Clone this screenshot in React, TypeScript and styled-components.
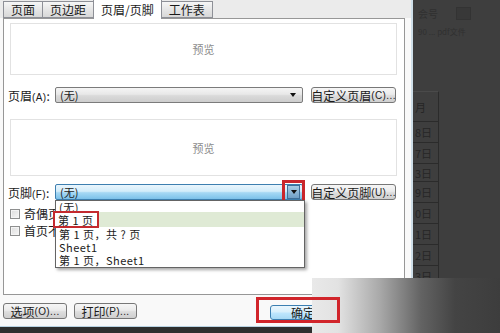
import styled, { createGlobalStyle } from "styled-components";

const GlobalStyle = createGlobalStyle`
  html, body { margin: 0; padding: 0; }
  body {
    width: 500px;
    height: 333px;
    overflow: hidden;
    background: #3d3d3d;
    font-family: "Noto Sans CJK SC", "Liberation Sans", sans-serif;
    color: #1a1a1a;
  }
`;

const tabs = ["页面", "页边距", "页眉/页脚", "工作表"];
const footerOptions = ["(无)", "第 1 页", "第 1 页，共 ? 页", "Sheet1", "第 1 页，Sheet1"];
const itemHeights = [11, 15, 13, 13, 14];
const days = ["8日", "7日", "3日", "9日", "0日", "1日", "2日", "3日"];

export default function App() {
  return (
    <>
      <GlobalStyle />
      <Page>
        <Dialog>
          <TabBar>
            {tabs.map((t) => (
              <Tab key={t} $active={t === "页眉/页脚"}>
                {t}
              </Tab>
            ))}
          </TabBar>
          <Panel>
            <Preview $h={52} $top={4}>预览</Preview>
            <FieldRow $top={12}>
              <Label>
                页眉<Key>(A)</Key>:
              </Label>
              <Select>
                <span>(无)</span>
                <Arrow />
              </Select>
              <Button $w={85}>
                自定义页眉<Key>(C)...</Key>
              </Button>
            </FieldRow>
            <Preview $h={57} $top={16}>预览</Preview>
            <FieldRow $top={8}>
              <Label>
                页脚<Key>(F)</Key>:
              </Label>
              <Select $focused>
                <span>(无)</span>
                <ArrowBox>
                  <Arrow />
                </ArrowBox>
              </Select>
              <Button $w={85}>
                自定义页脚<Key>(U)...</Key>
              </Button>
            </FieldRow>
            <CheckRow $top={8}>
              <Check />
              <CheckText>奇偶页不同(D)</CheckText>
            </CheckRow>
            <CheckRow $top={6}>
              <Check />
              <CheckText>首页不同(I)</CheckText>
            </CheckRow>
            <DropList>
              {footerOptions.map((o, i) => (
                <Item key={o} $h={itemHeights[i]} $selected={i === 1}>
                  {i === 1 ? <Marked>{o}</Marked> : o}
                </Item>
              ))}
            </DropList>
          </Panel>
          <Footer>
            <Button $w={64}>
              选项<Key>(O)...</Key>
            </Button>
            <Button $w={63}>
              打印<Key>(P)...</Key>
            </Button>
            <OkButton>确定</OkButton>
          </Footer>
          <BottomStrip />
        </Dialog>
        <DarkPane>
          <Ribbon>
            <Faint>会号</Faint>
            <FaintIcon />
          </Ribbon>
          <Faint $small>90 ... pdf文件</Faint>
          <Sheet>
            <Cell $h={30}>月</Cell>
            {days.map((d, i) => (
              <Cell key={i} $h={i === 2 ? 18 : 21}>
                {d}
              </Cell>
            ))}
          </Sheet>
        </DarkPane>
        <Fade />
        <OkMark />
      </Page>
    </>
  );
}

const Page = styled.div`
  position: relative;
  display: flex;
  width: 500px;
  height: 333px;
  overflow: hidden;
`;

const Dialog = styled.div`
  width: 411px;
  height: 333px;
  flex: none;
  display: flex;
  flex-direction: column;
  background: #f9f9f9;
  border-right: 2px solid #cfdfe9;
`;

const TabBar = styled.div`
  position: relative;
  z-index: 2;
  height: 18px;
  flex: none;
  display: flex;
  align-items: flex-end;
  padding-left: 3px;
  background: #ebebeb;
`;

const Tab = styled.div<{ $active?: boolean }>`
  height: ${(p) => (p.$active ? 19 : 15)}px;
  margin-bottom: ${(p) => (p.$active ? -1 : 0)}px;
  margin-right: -1px;
  padding: 0 7px;
  display: flex;
  align-items: center;
  font-size: 12px;
  line-height: 1;
  border: 1px solid #8e9097;
  border-bottom: ${(p) => (p.$active ? "none" : "1px solid #8e9097")};
  background: ${(p) =>
    p.$active ? "#ffffff" : "linear-gradient(#f6f6f6, #e6e6e6 50%, #d8d8d8)"};
`;

const Panel = styled.div`
  position: relative;
  margin-left: 3px;
  width: 387px;
  height: 275px;
  flex: none;
  display: flex;
  flex-direction: column;
  padding: 0 7px 0 6px;
  border: 1px solid #979797;
  background: #ffffff;
`;

const Preview = styled.div<{ $h: number; $top: number }>`
  height: ${(p) => p.$h}px;
  margin-top: ${(p) => p.$top}px;
  flex: none;
  display: flex;
  align-items: center;
  justify-content: center;
  border: 1px solid #e2e2e2;
  box-sizing: border-box;
  color: #8c8c8c;
  font-size: 11px;
`;

const FieldRow = styled.div<{ $top: number }>`
  height: 16px;
  margin-top: ${(p) => p.$top}px;
  margin-left: -2px;
  flex: none;
  display: flex;
  align-items: center;
`;

const Label = styled.div`
  width: 47px;
  flex: none;
  font-size: 12px;
  white-space: nowrap;
`;

const Key = styled.span`
  font-size: 10px;
  font-family: "Liberation Sans", sans-serif;
  letter-spacing: 0.4px;
`;

const Select = styled.div<{ $focused?: boolean }>`
  width: 248px;
  height: 16px;
  flex: none;
  box-sizing: border-box;
  display: flex;
  align-items: center;
  justify-content: space-between;
  padding: 0 6px 0 4px;
  font-size: 11px;
  border: 1px solid ${(p) => (p.$focused ? "#3d7fb0" : "#7b7b7b")};
  border-radius: 2px;
  background: ${(p) =>
    p.$focused
      ? "linear-gradient(#eaf6fd, #d2ecfa 45%, #a6d8f4 55%, #7cc1ea)"
      : "linear-gradient(#f5f5f5, #e8e8e8 45%, #dadada 55%, #cdcdcd)"};
`;

const Arrow = styled.span`
  width: 0;
  height: 0;
  border-left: 3.5px solid transparent;
  border-right: 3.5px solid transparent;
  border-top: 4px solid #111;
`;

const ArrowBox = styled.span`
  width: 11px;
  height: 12px;
  margin-right: -4px;
  display: flex;
  align-items: center;
  justify-content: center;
  background: linear-gradient(#a9cde6, #6f9fc6);
  border: 1px solid #3f6f98;
  outline: 3px solid #c9262c;
  outline-offset: 2px;
`;

const Button = styled.div<{ $w: number }>`
  width: ${(p) => p.$w}px;
  height: 16px;
  margin-left: 8px;
  flex: none;
  box-sizing: border-box;
  display: flex;
  align-items: center;
  justify-content: center;
  font-size: 12px;
  white-space: nowrap;
  border: 1px solid #777;
  border-radius: 3px;
  background: linear-gradient(#f6f6f6, #ebebeb 45%, #dddddd 55%, #cfcfcf);
`;

const CheckRow = styled.div<{ $top: number }>`
  height: 11px;
  margin-top: ${(p) => p.$top}px;
  flex: none;
  display: flex;
  align-items: center;
  gap: 4px;
  font-size: 12px;
`;

/* the rest of the label sits under the open drop-down list */
const CheckText = styled.span`
  width: 31px;
  overflow: hidden;
  white-space: nowrap;
  line-height: 14px;
`;

const Check = styled.span`
  width: 10px;
  height: 10px;
  flex: none;
  box-sizing: border-box;
  border: 1px solid #8e8f8f;
  background: linear-gradient(135deg, #dcdcdc, #f7f7f7);
  box-shadow: inset 0 0 0 1px #f4f4f4;
`;

const DropList = styled.div`
  position: absolute;
  z-index: 3;
  left: 51px;
  top: 181px;
  width: 250px;
  height: 68px;
  box-sizing: border-box;
  border: 1px solid #646464;
  background: #fff;
  box-shadow: 2px 2px 3px rgba(0, 0, 0, 0.35);
  display: flex;
  flex-direction: column;
`;

const Item = styled.div<{ $h: number; $selected?: boolean }>`
  height: ${(p) => p.$h}px;
  flex: none;
  display: flex;
  align-items: center;
  padding-left: 3px;
  font-size: 11px;
  letter-spacing: 0.5px;
  white-space: pre;
  background: ${(p) => (p.$selected ? "#dfead5" : "transparent")};
`;

const Marked = styled.span`
  height: 17px;
  margin: -1px 0 -1px -6px;
  padding: 0 3px;
  box-sizing: border-box;
  display: flex;
  align-items: center;
  border: 2px solid #c42a2e;
  background: #fff;
`;

const Footer = styled.div`
  height: 31px;
  flex: none;
  display: flex;
  align-items: flex-start;
  padding: 8px 0 0 3px;
  box-sizing: border-box;
  & > :first-child {
    margin-left: 0;
  }
  & > :nth-child(2) {
    margin-left: 7px;
  }
`;

const OkButton = styled.div`
  width: 60px;
  height: 15px;
  margin: 2px 0 0 133px;
  box-sizing: border-box;
  display: flex;
  align-items: center;
  justify-content: center;
  padding-left: 6px;
  font-size: 12px;
  border: 1px solid #3c7fb1;
  border-radius: 3px;
  background: linear-gradient(#eaf6fd, #d9f0fc 45%, #bee6fd 55%, #a7d9f5);
`;

const BottomStrip = styled.div`
  flex: 1;
  background: #2f2f2f;
  border-top: 1px solid #b9d3e3;
`;

const DarkPane = styled.div`
  flex: 1;
  display: flex;
  flex-direction: column;
  background: #3e3e3e;
  padding-top: 4px;
  color: #2c2c2c;
`;

const Ribbon = styled.div`
  height: 18px;
  display: flex;
  align-items: center;
  gap: 18px;
  padding-left: 5px;
`;

const Faint = styled.div<{ $small?: boolean }>`
  font-size: ${(p) => (p.$small ? 8 : 10)}px;
  color: #303030;
  white-space: nowrap;
  padding-left: ${(p) => (p.$small ? 5 : 0)}px;
  margin-top: ${(p) => (p.$small ? 4 : 0)}px;
`;

const FaintIcon = styled.span`
  width: 13px;
  height: 11px;
  border: 1px solid #333;
  background: #383838;
`;

const Sheet = styled.div`
  margin-top: 54px;
  width: 25px;
  border-top: 1px solid #4a4a4a;
  border-right: 1px solid #2b2b2b;
  display: flex;
  flex-direction: column;
`;

const Cell = styled.div<{ $h: number }>`
  height: ${(p) => p.$h}px;
  flex: none;
  box-sizing: border-box;
  display: flex;
  align-items: center;
  padding-left: 2px;
  font-size: 11px;
  color: #262626;
  border-bottom: 1px solid #2b2b2b;
`;

const Fade = styled.div`
  position: absolute;
  z-index: 4;
  left: 312px;
  top: 278px;
  width: 188px;
  height: 55px;
  background: linear-gradient(
    to right,
    #e9e9e9 0%,
    #e2e2e2 14%,
    #a9a9a9 36%,
    #636363 58%,
    #444 76%,
    #3d3d3d 100%
  );
`;

const OkMark = styled.div`
  position: absolute;
  z-index: 5;
  left: 256px;
  top: 297px;
  width: 84px;
  height: 26px;
  box-sizing: border-box;
  border: 3px solid #d1252b;
`;
